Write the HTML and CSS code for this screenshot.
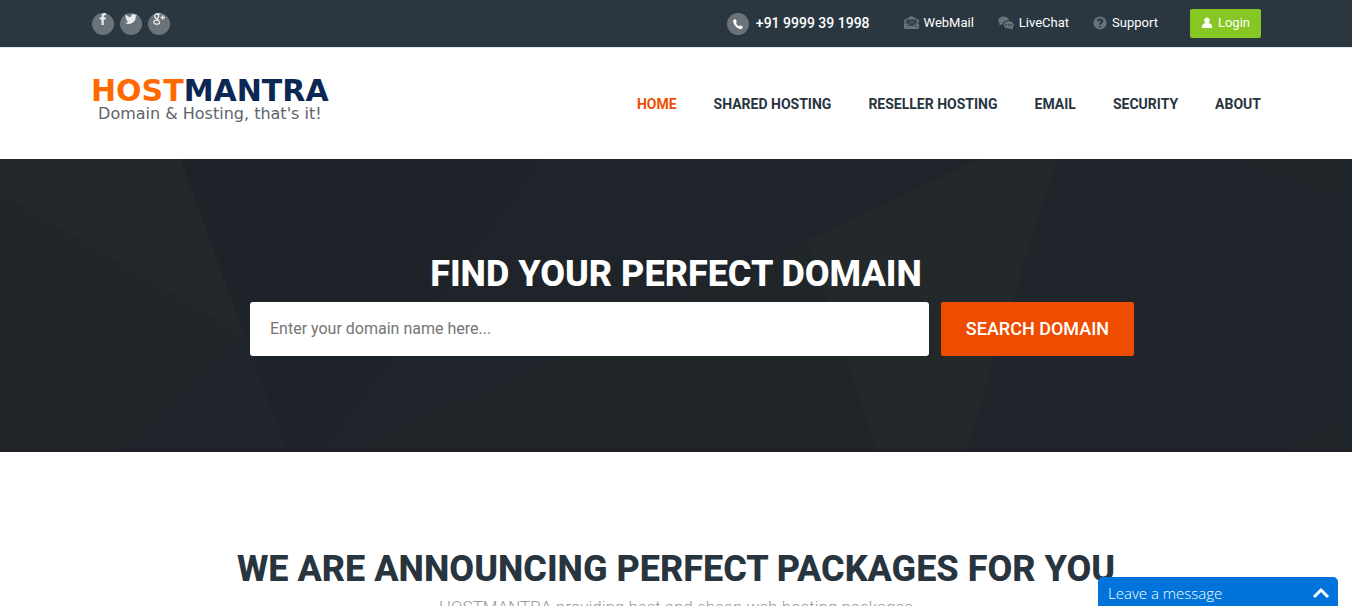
FILE: index.html
```
<!DOCTYPE html>
<html lang="en">
<head>
    <meta charset="UTF-8">
    <meta name="viewport" content="width=device-width, initial-scale=1.0">
    <title>HostMantra</title>
    <link rel="stylesheet" href="styles.css">
</head>
<body>
    <div class="topbar">
        <div class="container topbar-inner">
            <ul class="social">
                <li><a href="#" aria-label="Facebook">
                    <svg width="12" height="12" viewBox="0 0 12 12"><path d="M9 .2v2H7.700c-.7 0-.9.3-.9.9v1.300H9l-.3 2.100H6.800V12H4.500V6.500H2.700V4.400h1.800V2.800C4.500 1.100 5.600.1 7.300.1z"/></svg>
                </a></li>
                <li><a href="#" aria-label="Twitter">
                    <svg width="12" height="12" viewBox="0 0 24 24"><path d="M24 4.600a10 10 0 0 1-2.800.8 5 5 0 0 0 2.100-2.700 10 10 0 0 1-3.100 1.200 4.900 4.900 0 0 0-8.400 4.500A14 14 0 0 1 1.700 3.100a4.900 4.900 0 0 0 1.500 6.600 5 5 0 0 1-2.200-.6 4.900 4.900 0 0 0 3.900 4.900 5 5 0 0 1-2.200.1 4.900 4.900 0 0 0 4.600 3.400A10 10 0 0 1 0 19.500 14 14 0 0 0 21.500 7.100 10 10 0 0 0 24 4.600z"/></svg>
                </a></li>
                <li><a href="#" aria-label="Google Plus">
                    <svg class="line" width="12" height="12" viewBox="0 0 12 12"><ellipse cx="3.700" cy="3.200" rx="2" ry="2.300"/><path d="M7.500.8H3.700M4.500 5.500c-.8.8.3 1.100 1.200 1.900M7.500 4.500H12M9.700 2.300v4.500"/><ellipse cx="3.700" cy="9.200" rx="2.900" ry="2"/></svg>
                </a></li>
            </ul>
            <ul class="contact">
                <li class="phone">
                    <span class="circle"><svg width="12" height="12" viewBox="0 0 12 12"><path d="M3.300 1 1.200 2.200C.8 4.500 3 8 5 9.500c2 1.500 3.800 1.700 4.800 1.300L11 9 8.500 7.300 7 8.300C5.800 7.700 4.700 6.500 4 5l.9-1.500z"/></svg></span>
                    <span class="number">+91 9999 39 1998</span>
                </li>
                <li><a href="#">
                    <svg width="15" height="13" viewBox="0 0 15 13"><path class="grey" d="M0 4 7.500 0 15 4v8a1 1 0 0 1-1 1H1a1 1 0 0 1-1-1z"/><path class="dark" d="M2.500 3.500h10v3L7.500 10l-5-3.500z"/><path class="grey" d="M4.500 4.500h6v2l-3 2.300-3-2.300z" opacity=".4"/><path class="dark" d="M0 5.500l4.500 3.500L1 12l4.500-2.500h4L14 12l-3.500-3L15 5.500v1L11 9l-1 1H5L4 9 0 6.500z"/></svg>
                    WebMail</a></li>
                <li><a href="#">
                    <svg width="16" height="14" viewBox="0 0 16 14"><path class="grey" d="M5.500.5C2.500.5.200 2.300.2 4.500c0 1.300.8 2.300 1.700 3L1 9.500l3-1.200h1C5 5.600 7.500 4.200 11 4.200 10.700 2 8.500.5 5.500.5z"/><path class="grey" d="M10.500 5.200c-2.900 0-4.800 1.500-4.800 3.600 0 2.100 2 3.700 4.800 3.700l1.500-.1 3 1.400-.5-2.200c.9-.7 1.300-1.700 1.300-2.800 0-2.100-2.300-3.600-5.300-3.600z"/><path class="dark" d="M7.500 8.200h1.500v1.300H7.500zm2.500 0h1.500v1.300H10zm2.500 0H14v1.300h-1.500z"/></svg>
                    LiveChat</a></li>
                <li><a href="#">
                    <svg width="14" height="14" viewBox="0 0 14 14"><circle class="grey" cx="7" cy="7" r="6.500"/><path class="question" d="M4.800 5.200C5 3 9.200 3 9.200 5.300 9.200 6.800 7 6.700 7 8.500M7 9.700v1.600"/></svg>
                    Support</a></li>
                <li><a class="login" href="#">
                    <svg width="12" height="12" viewBox="0 0 12 12"><path d="M6 .5a2.800 2.800 0 0 1 2 4.800l-.5.700c2.500.3 3.700 2 3.700 5H.8c0-3 1.200-4.700 3.700-5L4 5.300A2.800 2.800 0 0 1 6 .5z"/></svg>
                    Login</a></li>
            </ul>
        </div>
    </div>

    <header class="header">
        <div class="container header-inner">
            <a class="logo" href="#">
                <span class="brand">HOST<span>MANTRA</span></span>
                <span class="tagline">Domain &amp; Hosting, that's it!</span>
            </a>
            <nav class="menu">
                <a class="active" href="#">HOME</a>
                <a href="#">SHARED HOSTING</a>
                <a href="#">RESELLER HOSTING</a>
                <a href="#">EMAIL</a>
                <a href="#">SECURITY</a>
                <a href="#">ABOUT</a>
            </nav>
        </div>
    </header>

    <section class="banner">
        <svg class="shapes" viewBox="0 0 1352 293" preserveAspectRatio="none" aria-hidden="true">
            <path fill="#23282b" d="M0 0h181l63 178L0 35z"/>
            <path fill="#212629" d="M0 35l244 143-119 115H0z"/>
            <path fill="#20242c" d="M244 178l43 115H125z"/>
            <path fill="#1e2229" d="M181 0h359L322 293h-35z"/>
            <path fill="#1f242b" d="M540 0h438L807 82 560 200 366 293h-44z"/>
            <path fill="#202528" d="M366 293l194-93L807 82l69 211z"/>
            <path fill="#23282b" d="M807 82L978 0h79l-90 293h-91z"/>
            <path fill="#20242b" d="M1057 0h295v293H967z"/>
            <path fill="#21262b" d="M1230 0h122v40zM1280 293l72-33v33z"/>
        </svg>
        <div class="container">
            <h1>FIND YOUR PERFECT DOMAIN</h1>
            <form class="search">
                <input type="text" aria-label="Domain name" placeholder="Enter your domain name here...">
                <button type="submit">SEARCH DOMAIN</button>
            </form>
        </div>
    </section>

    <section class="packages">
        <div class="container">
            <h2>WE ARE ANNOUNCING PERFECT PACKAGES FOR YOU</h2>
            <p>HOSTMANTRA providing best and cheap web hosting packages</p>
        </div>
    </section>

    <button class="chat" type="button">
        <span>Leave a message</span>
        <svg width="18" height="14" viewBox="0 0 18 14"><path d="M2 11l7-7 7 7"/></svg>
    </button>
</body>
</html>
```
FILE: styles.css
```
* {
    box-sizing: border-box;
}
body {
    margin: 0;
    background: #fff;
    color: #28353f;
    font-family: Roboto, "Liberation Sans", sans-serif;
}
a {
    color: inherit;
    text-decoration: none;
}
ul {
    margin: 0;
    padding: 0;
    list-style: none;
}
.container {
    max-width: 1170px;
    margin: 0 auto;
}

/* top bar */
.topbar {
    background: #2a3640;
    border-bottom: 1px solid #e8ebee;
    color: #fff;
}
.topbar-inner {
    display: flex;
    justify-content: space-between;
    align-items: center;
    height: 47px;
}
.social {
    display: flex;
    gap: 6px;
    padding-left: 1px;
}
.social a {
    display: flex;
    justify-content: center;
    width: 22px;
    height: 22px;
    border-radius: 50%;
    background: #6a727a;
}
.social svg {
    fill: #e9ebec;
}
.social .line {
    fill: none;
    stroke: #e9ebec;
    stroke-width: 1.3;
}
.contact {
    display: flex;
    align-items: center;
    gap: 24px;
    font-size: 13px;
}
.contact li, .contact a {
    display: flex;
    align-items: center;
    gap: 5px;
}
.contact a, .number {
    padding-bottom: 2px;
}
.contact .phone {
    gap: 7px;
    margin-right: 10px;
    font-size: 14px;
    font-weight: 500;
}
.circle {
    display: flex;
    align-items: center;
    justify-content: center;
    width: 22px;
    height: 22px;
    border-radius: 50%;
    background: #6a727a;
}
.circle svg, .login svg {
    fill: #fff;
}
.grey {
    fill: #6a727a;
}
.dark {
    fill: #2a3640;
}
.question {
    fill: none;
    stroke: #2a3640;
    stroke-width: 2;
}
.contact .login {
    height: 29px;
    margin-left: 8px;
    padding: 0 11px 2px;
    border-radius: 2px;
    background: #86c724;
}

/* header */
.header-inner {
    display: flex;
    justify-content: space-between;
    align-items: center;
    height: 111px;
}
.logo {
    display: flex;
    flex-direction: column;
    align-items: center;
    padding-bottom: 2px;
    font-family: "DejaVu Sans", sans-serif;
}
.brand {
    color: #ff6a00;
    font-size: 30px;
    font-weight: bold;
    line-height: 22px;
}
.brand span {
    color: #0b2855;
}
.tagline {
    color: #5d646c;
    font-size: 16px;
    line-height: 24px;
}
.menu {
    display: flex;
    gap: 37px;
    font-size: 14px;
    font-weight: bold;
}
.menu .active {
    color: #ee4d00;
}

/* domain search */
.banner {
    position: relative;
    padding: 95px 0 93px;
    border-bottom: 3px solid #1e2227;
    background: #20242b;
}
.shapes {
    position: absolute;
    top: 0;
    left: 0;
    width: 100%;
    height: 100%;
}
.banner .container {
    position: relative;
}
h1, h2 {
    margin: 0;
    font-size: 36px;
    font-weight: 800;
    line-height: 40px;
    text-align: center;
}
h1 {
    color: #fff;
}
.search {
    display: flex;
    gap: 12px;
    max-width: 916px;
    margin: 8px auto 0;
    padding-left: 32px;
}
.search input {
    flex: 1;
    min-width: 0;
    height: 54px;
    padding: 0 20px 2px;
    border: 0;
    border-radius: 3px;
    font-family: inherit;
    font-size: 16px;
}
.search input::placeholder {
    color: #757575;
}
.search button {
    padding: 0 25px 2px;
    border: 0;
    border-radius: 2px;
    background: #ee4d00;
    color: #fff;
    font-family: inherit;
    font-size: 18px;
    font-weight: 500;
}

/* packages */
.packages {
    padding-top: 97px;
    text-align: center;
}
.packages p {
    margin: 8px 0 0;
    color: #999;
    font-size: 17px;
    font-weight: 300;
    line-height: 20px;
}

/* chat box */
.chat {
    position: fixed;
    right: 14px;
    bottom: 0;
    display: flex;
    justify-content: space-between;
    align-items: center;
    width: 240px;
    height: 29px;
    padding: 3px 8px 0 10px;
    border: 0;
    border-radius: 5px 5px 0 0;
    background: #0074db;
    color: #fff;
    font-family: "Open Sans", sans-serif;
    font-size: 15px;
    font-weight: 300;
}
.chat path {
    fill: none;
    stroke: #fff;
    stroke-width: 3;
}
```
